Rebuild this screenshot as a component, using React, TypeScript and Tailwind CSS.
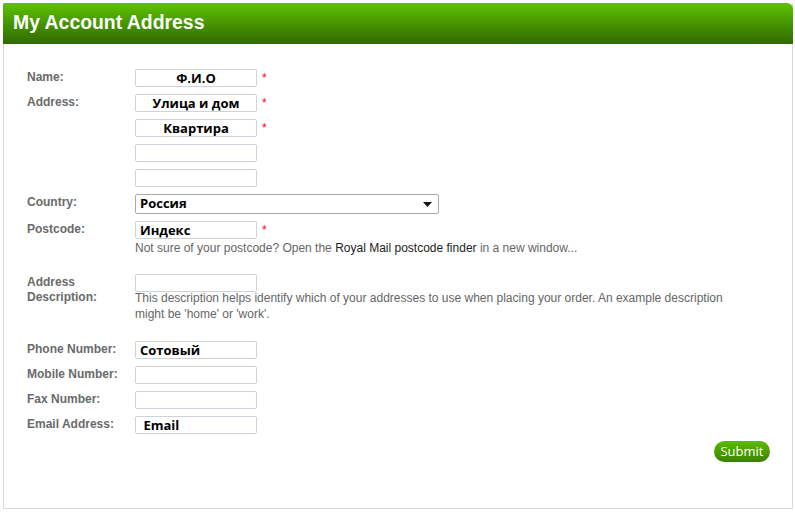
const labelCls =
  "w-[108px] shrink-0 text-[12px] font-bold leading-[15px] text-[#6a6a6a]";
const inputCls =
  "h-[18px] w-[122px] rounded-[2px] border border-[#cdd3da] bg-white px-[4px] text-[13px] font-bold leading-[16px] text-black outline-none font-['Open_Sans',sans-serif]";

function Star() {
  return <span className="ml-[5px] mt-[3px] text-[12px] leading-none text-[#ff0000]">*</span>;
}

function Field({ value = "", center = false, required = false }: { value?: string; center?: boolean; required?: boolean }) {
  return (
    <div className="flex items-start">
      <input
        readOnly
        defaultValue={value}
        className={`${inputCls} ${center ? "text-center" : "text-left"}`}
      />
      {required && <Star />}
    </div>
  );
}

function Row({ label, children, className = "" }: { label: React.ReactNode; children: React.ReactNode; className?: string }) {
  return (
    <div className={`flex items-start ${className}`}>
      <div className={`${labelCls} pt-[1px]`}>{label}</div>
      <div className="flex flex-col gap-[7px]">{children}</div>
    </div>
  );
}

export default function App() {
  return (
    <div className="w-[795px] h-[512px] bg-white p-[3px] font-['Liberation_Sans',Arial,sans-serif]">
      <div className="flex h-[506px] w-[790px] flex-col border border-t-0 border-[#d9d9d9]">
        {/* Header */}
        <div className="-mx-px flex h-[41px] items-center rounded-tr-[6px] rounded-tl-[2px] bg-gradient-to-b from-[#5fc300] to-[#2f6a00] pl-[10px]">
          <h1 className="-mt-px text-[19.4px] font-bold text-white">My Account Address</h1>
        </div>

        <div className="flex flex-col pl-[23px] pr-[22px] pt-[25px]">
          <Row label="Name:">
            <Field value="Ф.И.О" center required />
          </Row>

          <Row label="Address:" className="mt-[7px]">
            <Field value="Улица и дом" center required />
            <Field value="Квартира" center required />
            <Field />
            <Field />
          </Row>

          <Row label="Country:" className="mt-[7px]">
            <div className="flex h-[20px] w-[304px] items-center justify-between rounded-[2px] border border-[#a9a9a9] bg-white pl-[4px] pr-[6px]">
              <span className="text-[13px] font-bold text-black font-['Open_Sans',sans-serif]">Россия</span>
              <svg width="9" height="5" viewBox="0 0 9 5">
                <path d="M0 0h9L4.5 5z" fill="#111" />
              </svg>
            </div>
          </Row>

          <Row label="Postcode:" className="mt-[7px]">
            <div className="flex flex-col">
              <Field value="Индекс" required />
              <p className="mt-px text-[12px] leading-[16px] text-[#666]">
                Not sure of your postcode? Open the{" "}
                <span className="text-[#222]">Royal Mail postcode finder</span> in a new window...
              </p>
            </div>
          </Row>

          <Row
            label={
              <>
                Address
                <br />
                Description:
              </>
            }
            className="mt-[18px]"
          >
            <div className="flex flex-col">
              <Field />
              <p className="-mt-[2px] w-[612px] text-[12px] leading-[16px] text-[#666]">
                This description helps identify which of your addresses to use when placing your order. An example description might be 'home' or 'work'.
              </p>
            </div>
          </Row>

          <Row label="Phone Number:" className="mt-[19px]">
            <Field value="Сотовый" />
          </Row>
          <Row label="Mobile Number:" className="mt-[7px]">
            <Field />
          </Row>
          <Row label="Fax Number:" className="mt-[7px]">
            <Field />
          </Row>
          <Row label="Email Address:" className="mt-[7px]">
            <Field value=" Email" />
          </Row>

          <div className="mt-[7px] flex justify-end">
            <button className="h-[21px] w-[56px] rounded-full bg-gradient-to-b from-[#5cbc00] to-[#3b8200] text-[13px] leading-[21px] text-white font-['Open_Sans',sans-serif]">
              Submit
            </button>
          </div>
        </div>
      </div>
    </div>
  );
}
